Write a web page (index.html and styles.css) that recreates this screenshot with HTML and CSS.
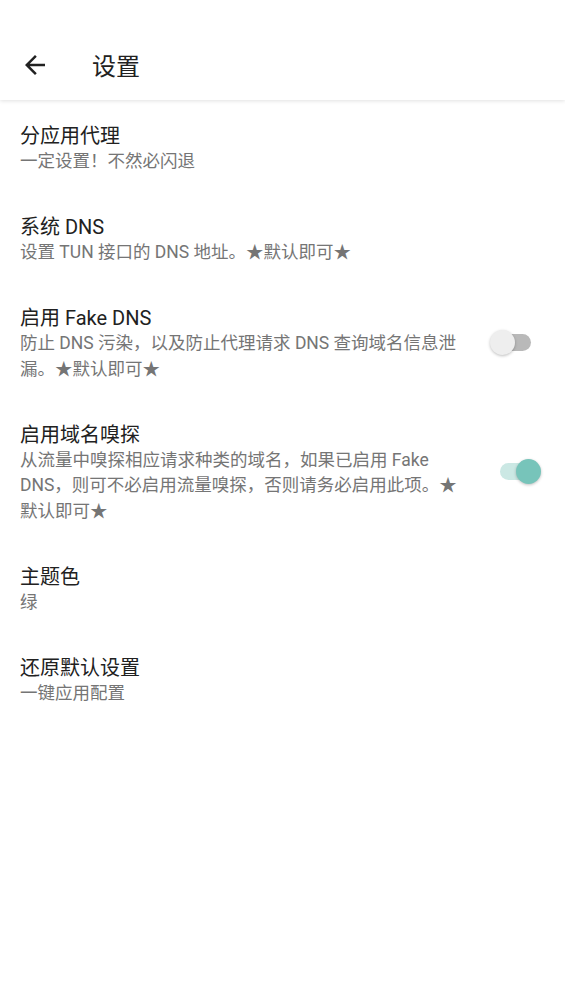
FILE: index.html
```html
<!DOCTYPE html>
<html lang="zh-CN">
<head>
  <meta charset="UTF-8" />
  <meta name="viewport" content="width=device-width, initial-scale=1.0" />
  <title>设置</title>
  <link rel="stylesheet" href="styles.css">
</head>
<body>
  <div class="appbar">
    <div class="toolbar">
      <div class="nav-icon">
        <svg viewBox="0 0 24 24" width="30" height="30"><path d="M20 11H7.83l5.59-5.59L12 4l-8 8 8 8 1.41-1.41L7.83 13H20v-2z" fill="#212121"/></svg>
      </div>
      <div class="toolbar-title">设置</div>
    </div>
  </div>

  <div class="prefs">
    <div class="pref">
      <div class="pref-text">
        <div class="pref-title">分应用代理</div>
        <div class="pref-summary">一定设置！不然必闪退</div>
      </div>
    </div>

    <div class="pref">
      <div class="pref-text">
        <div class="pref-title">系统 DNS</div>
        <div class="pref-summary">设置 TUN 接口的 DNS 地址。★默认即可★</div>
      </div>
    </div>

    <div class="pref">
      <div class="pref-text">
        <div class="pref-title">启用 Fake DNS</div>
        <div class="pref-summary">防止 DNS 污染，以及防止代理请求 DNS 查询域名信息泄漏。★默认即可★</div>
      </div>
      <div class="switch off"><div class="track"></div><div class="thumb"></div></div>
    </div>

    <div class="pref">
      <div class="pref-text">
        <div class="pref-title">启用域名嗅探</div>
        <div class="pref-summary">从流量中嗅探相应请求种类的域名，如果已启用 Fake DNS，则可不必启用流量嗅探，否则请务必启用此项。★默认即可★</div>
      </div>
      <div class="switch on"><div class="track"></div><div class="thumb"></div></div>
    </div>

    <div class="pref">
      <div class="pref-text">
        <div class="pref-title">主题色</div>
        <div class="pref-summary">绿</div>
      </div>
    </div>

    <div class="pref">
      <div class="pref-text">
        <div class="pref-title">还原默认设置</div>
        <div class="pref-summary">一键应用配置</div>
      </div>
    </div>
  </div>
</body>
</html>
```

FILE: styles.css
```css
* {
  box-sizing: border-box;
}

body {
  margin: 0;
  background-color: #ffffff;
  font-family: Roboto, "Noto Sans CJK SC", sans-serif;
  color: #212121;
}

.appbar {
  background-color: #ffffff;
  padding-top: 30px;
  box-shadow: 0 1px 4px rgba(0, 0, 0, 0.12);
  position: relative;
}

.toolbar {
  height: 70px;
  display: flex;
  align-items: center;
}

.nav-icon {
  width: 30px;
  height: 30px;
  margin-left: 20px;
  display: flex;
}

.toolbar-title {
  margin-left: 42px;
  margin-bottom: 2px;
  font-size: 24px;
  color: #212121;
}

.pref {
  display: flex;
  align-items: center;
  padding: 23px 0 16.5px 20px;
}

.pref-text {
  width: 446px;
}

.pref-title {
  font-size: 20px;
  line-height: 26px;
  color: #212121;
}

.pref-summary {
  font-size: 17.5px;
  line-height: 25.5px;
  color: #757575;
}

.switch {
  position: relative;
  width: 41px;
  height: 25px;
  margin-top: -2px;
}

.switch.off {
  margin-left: 24px;
}

.switch.on {
  margin-left: 34px;
}

.track {
  position: absolute;
  left: 5px;
  right: 0;
  top: 4px;
  height: 17px;
  border-radius: 9px;
  background-color: #b9b9b9;
}

.thumb {
  position: absolute;
  top: 0;
  left: 0;
  width: 25px;
  height: 25px;
  border-radius: 50%;
  background-color: #eeeeee;
  box-shadow: 0 1px 3px rgba(0, 0, 0, 0.25);
}

.switch.on .track {
  left: 0;
  right: 5px;
  background-color: #cbe8e4;
}

.switch.on .thumb {
  left: 16px;
  background-color: #77c4ba;
}
```
